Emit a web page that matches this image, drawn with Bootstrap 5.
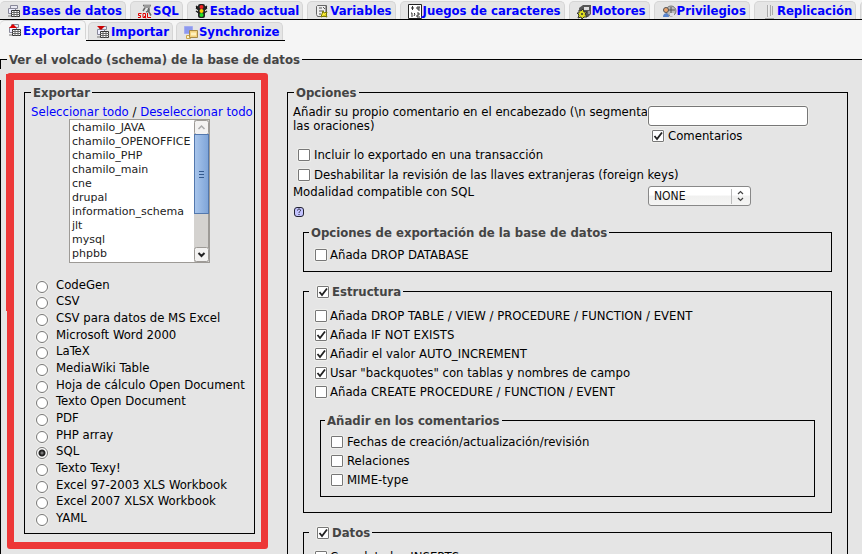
<!DOCTYPE html>
<html lang="es">
<head>
<meta charset="utf-8">
<meta name="viewport" content="width=device-width, initial-scale=1">
<title>Exportar</title>
<link href="https://cdn.jsdelivr.net/npm/bootstrap@5.3.0/dist/css/bootstrap.min.css" rel="stylesheet">
<style>
body{font:13px/15px "DejaVu Sans Condensed","DejaVu Sans",sans-serif;background:#f5f5f5;color:#000;height:100vh;overflow:hidden}
a{color:#00f;text-decoration:none}
.tabs-main{border-bottom:1px solid #000;padding-top:1px;gap:4px;height:20px}
.tabs-main .nav-link,.tabs-sub .nav-link{display:flex;align-items:center;white-space:nowrap;font-weight:700;color:#00f;background:#e5e5e5;border:1px solid #d5d5d5;border-bottom:0;border-radius:5px 5px 0 0;padding:0 3px 0 7px;height:18px}
.tabs-main .nav-link:first-child{border-left:0}
.nav-link svg{width:15px;height:16px;flex:none}
.tabs-sub{height:21px}
.tabs-sub .nav-link.active{background:#f5f5f5;padding-left:8px;padding-right:5px;border-left:0;height:19px}
.tabs-rest{border-bottom:1px solid #000;padding:2px 2px 0 2px;gap:3px;height:21px}
fieldset{border:1px solid #000;background:#e5e5e5}
legend{float:none;width:auto;margin:0;padding:0 2px;font-size:13px;line-height:15px;font-weight:700;color:#444}
.page-set{border-width:1px 0 0;margin-top:11px}
.page-set>legend{margin-left:7px}
.page-set::after{content:"";position:absolute;left:0;top:59px;width:1px;height:10px;background:#000}
.page-body{padding:6px 14px 0 7px;gap:19px;background:linear-gradient(#000,#000) 0 13px/1px 100% no-repeat}
.marked{position:relative;width:261px;flex:none;border:7px solid #ed3737;border-radius:3px;padding:5px 6px 8px 10px}
.marked::before{content:"";position:absolute;left:-8px;top:-6px;width:2px;height:237px;background:#ed3737}
.export-set{padding:4px 6px 6px}
.dblist{width:141px;height:144px;border:1px solid #9d9a96;background:#fff}
.dblist select{flex:1;min-width:0;border:0;outline:0;padding:1px 0 0;margin:0;font:11px/14px "DejaVu Sans",sans-serif;color:#222;background:#fff;overflow:hidden;scrollbar-width:none;height:142px}
.dblist option{padding:0 2px;min-height:0;height:14px;line-height:14px;white-space:nowrap}
.dblist svg{width:15px;height:142px;flex:none}
.formats{margin-top:14px;padding-left:5px}
.fmt{height:17px;gap:8px}
.fmt:nth-child(3n+1){height:16px}
.fmt input{margin-top:4px}
input[type=radio],input[type=checkbox]{appearance:none;width:12px;height:12px;flex:none;background:#fff;border:1px solid #777;box-shadow:0 0 0 1px #efefec}
input[type=radio]{border-radius:50%}
input[type=radio]:checked{background:radial-gradient(circle,#777 0 1px,#222 2px 3px,#fff 4px)}
input[type=checkbox]{margin-top:1px;border-radius:1px}
input[type=checkbox]:checked{background:#fff url("data:image/svg+xml,%3Csvg xmlns='http://www.w3.org/2000/svg' viewBox='0 0 10 10'%3E%3Cpath d='M1.5 5 4 8 9 1.5' fill='none' stroke='%23222' stroke-width='1.8'/%3E%3C/svg%3E")}
.opt-set{margin-top:12px;padding:4px 15px 20px 5px}
.opt-set>legend{margin-left:1px}
.comment-label{width:355px;line-height:14px;padding-top:1px;white-space:nowrap}
.comment-box{width:160px;height:20px;border:1px solid #777;border-radius:3px;background:#fff;box-shadow:0 0 0 1px #efefec;margin-top:2px}
.chk{display:flex;align-items:center;gap:4px;white-space:nowrap}
.under-box{margin-top:2px}
.top-opts{padding:1px 0 0 5px}
.rows .chk{height:19px}
.top-opts .chk{height:20px}
.compat{width:103px;height:20px;margin-top:2px;border:1px solid #888;border-radius:3px;padding:0 5px;font:12px/18px "DejaVu Sans Condensed",sans-serif;appearance:none;color:#111;background:url("data:image/svg+xml,%3Csvg xmlns='http://www.w3.org/2000/svg' width='20' height='18'%3E%3Cpath d='M1.5 2v15' stroke='%23bbb'/%3E%3Cpath d='M8 7l2.500-2.500L13 7M8 11l2.500 2.500L13 11' fill='none' stroke='%23444' stroke-width='1.200'/%3E%3C/svg%3E") right 0 top 0 no-repeat,linear-gradient(#fff,#fff 45%,#f0f0ef 50%,#f5f5f4)}
.help{width:10px;height:12px;display:block;margin-left:1px;margin-bottom:7px}
.group{margin:0 0 12px 10px;padding:5px 11px 7px}
.group legend{margin-left:-6px}
.group .with-check{padding-left:8px}
.with-check~.rows{margin-top:2px}
.group .chk{gap:3px}
.group .nested{margin:12px 5px 8px 5px;padding:4px 10px 7px}
.group .nested .chk{gap:4px}
</style>
<script src="https://cdn.jsdelivr.net/npm/bootstrap@5.3.0/dist/js/bootstrap.bundle.min.js"></script>
</head>
<body>
<svg class="d-none">
<symbol id="i-db" viewBox="0 0 15 16"><path d="M3.500 2.500h7v3h-7z" fill="#e8e8f2" stroke="#889"/><path d="M1.500 5.500h7v5h-7z" fill="#eef" stroke="#889"/><path d="M1 13h3" stroke="#777"/><path d="M4.500 7.500h8v6h-8z" fill="#fff" stroke="#333"/><path d="M4 9.500h9M4 11.500h9M7 8v6M10 8v6" stroke="#666"/></symbol>
<symbol id="i-up" viewBox="0 0 15 16"><use href="#i-db"/><path d="M1 6l4-4 4 4z" fill="#d00"/></symbol>
<symbol id="i-down" viewBox="0 0 15 16"><use href="#i-db"/><path d="M1 2h8L5 6z" fill="#c00"/></symbol>
<symbol id="i-sql" viewBox="0 0 15 16"><path d="M5 2.500h7l-2 5 3 5M8 3l-3 5M11 3v5l-3 1" fill="none" stroke="#666" stroke-width="1.500"/><path d="M6 2h6v3H6z" fill="#999"/><path d="M3.500 10.500h-3v2h2v2h-3M5 10.500h2.500v4H5zM6 13l2 2.500M9.500 10v4.500H13" fill="none" stroke="#e00000"/></symbol>
<symbol id="i-light" viewBox="0 0 15 16"><path d="M1 3l3 2v2L1 5M1 8l3 2v1M12 3L9 5v2l3-2M12 8l-3 2" stroke="#222" stroke-width="1.500"/><rect x="3" y="1" width="7" height="14" rx="2" fill="#222"/><circle cx="6.500" cy="4" r="2" fill="#e22"/><circle cx="6.500" cy="8" r="2" fill="#fc0"/><circle cx="6.500" cy="12" r="2" fill="#2d2"/></symbol>
<symbol id="i-vars" viewBox="0 0 15 16"><path d="M2.500 2.500h9v11h-9l-1-2v-8z" fill="#eee" stroke="#666"/><path d="M4 5h3M8 4l2 2M4 8h5M4 11h2M11 3v10" stroke="#555"/><path d="M8 8l1 2 3-1-1 3 1 2-3-1-3 1 1-3z" fill="#fe3" stroke="#770"/></symbol>
<symbol id="i-chars" viewBox="0 0 15 16"><path d="M.5 1.500h13v14H.5z" fill="#fff" stroke="#222"/><path d="M3 5h3M4.500 3v4M9 4h3M9 4v2h2M11 4v4M3 10h1v4M6 10l1 1-1 2M9 10h2v2H9v2h3" fill="none" stroke="#333"/></symbol>
<symbol id="i-engine" viewBox="0 0 15 16"><path d="M2 5l4-3h8v9l-3 3H3z" fill="#555"/><path d="M7 4h5v3H7z" fill="#ddd"/><path d="M11 8h2v3h-2z" fill="#999"/><path d="M2 7l2 1 2-2 1 3h3l-2 2 2 3H7l-2 2-1-2-3 1 1-3-2-2h2z" fill="#dd2" stroke="#333"/><circle cx="5" cy="11" r="1" fill="#333"/></symbol>
<symbol id="i-priv" viewBox="0 0 15 16"><circle cx="9" cy="8" r="5" fill="#bbb" stroke="#777"/><path d="M6 7h7M9 4v8" stroke="#555"/><circle cx="4" cy="7" r="2.500" fill="#eba56c" stroke="#555"/><path d="M1 14c0-5 6-5 6 0z" fill="#5b86ce"/><path d="M8 10h4v3H8z" fill="#e0e0e8"/></symbol>
<symbol id="i-repl" viewBox="0 0 15 16"><path d="M5.500 2v12M8.500 2v11M10.500 3v9M3 15.500h9" stroke="#aaa"/><path d="M6.500 2v11" stroke="#eee"/></symbol>
<symbol id="i-sync" viewBox="0 0 15 16"><path d="M.5 2.500h8v7h-8z" fill="#8c99ee" stroke="#a3aaf0"/><path d="M2.500 11.500h4v3h-4z" fill="#fff3bd" stroke="#cba64a"/><path d="M5.500 6.500h8v7h-8z" fill="#f3d17b" stroke="#a78a49"/><path d="M7 8.500h5v3H7z" fill="#fff1bd"/></symbol>
</svg>

<nav class="nav tabs-main flex-nowrap" aria-label="Servidor">
<a class="nav-link" href="#"><svg><use href="#i-db"/></svg>Bases de datos</a>
<a class="nav-link" href="#"><svg><use href="#i-sql"/></svg>SQL</a>
<a class="nav-link" href="#"><svg><use href="#i-light"/></svg>Estado actual</a>
<a class="nav-link" href="#"><svg><use href="#i-vars"/></svg>Variables</a>
<a class="nav-link" href="#"><svg><use href="#i-chars"/></svg>Juegos de caracteres</a>
<a class="nav-link" href="#"><svg><use href="#i-engine"/></svg>Motores</a>
<a class="nav-link" href="#"><svg><use href="#i-priv"/></svg>Privilegios</a>
<a class="nav-link" href="#"><svg><use href="#i-repl"/></svg>Replicación</a>
<a class="nav-link" href="#" aria-label="Más"></a>
</nav>
<nav class="nav tabs-sub flex-nowrap" aria-label="Acciones">
<a class="nav-link active" href="#" aria-current="page"><svg><use href="#i-up"/></svg>Exportar</a>
<div class="tabs-rest d-flex">
<a class="nav-link" href="#"><svg><use href="#i-down"/></svg>Importar</a>
<a class="nav-link" href="#"><svg><use href="#i-sync"/></svg>Synchronize</a>
</div>
</nav>

<form>
<fieldset class="page-set">
<legend>Ver el volcado (schema) de la base de datos</legend>
<div class="page-body d-flex align-items-start">
<div class="marked">
<fieldset class="export-set">
<legend>Exportar</legend>
<div class="text-center text-nowrap"><a href="#">Seleccionar todo</a> / <a href="#">Deseleccionar todo</a></div>
<div class="dblist d-flex mx-auto">
<select multiple size="10" aria-label="Bases de datos">
<option>chamilo_JAVA</option><option>chamilo_OPENOFFICE</option><option>chamilo_PHP</option><option>chamilo_main</option><option>cne</option><option>drupal</option><option>information_schema</option><option>jlt</option><option>mysql</option><option>phpbb</option>
</select>
<svg viewBox="0 0 15 142" aria-hidden="true"><defs><linearGradient id="g"><stop stop-color="#a9c6ec"/><stop offset="1" stop-color="#7ea4d8"/></linearGradient></defs><path d="M0 0h15v142H0z" fill="#d4d2cf"/><path d="M14.500 94v34" stroke="#9d9a96"/><rect x=".5" y=".5" width="14" height="14" rx="2" fill="#f3f2f1" stroke="#9d9a96"/><path d="M4.500 9l3-3 3 3" fill="none" stroke="#aaa" stroke-width="1.500"/><rect x=".5" y="14.500" width="14" height="79" fill="url(#g)" stroke="#5378ad"/><path d="M5 51.500h5M5 54.500h5M5 57.500h5" stroke="#34598d"/><rect x=".5" y="127.500" width="14" height="14" rx="2" fill="#f3f2f1" stroke="#9d9a96"/><path d="M4.500 133l3 3 3-3" fill="none" stroke="#222" stroke-width="2"/></svg>
</div>
<div class="formats">
<label class="fmt d-flex align-items-start"><input type="radio" name="f">CodeGen</label>
<label class="fmt d-flex align-items-start"><input type="radio" name="f">CSV</label>
<label class="fmt d-flex align-items-start"><input type="radio" name="f">CSV para datos de MS Excel</label>
<label class="fmt d-flex align-items-start"><input type="radio" name="f">Microsoft Word 2000</label>
<label class="fmt d-flex align-items-start"><input type="radio" name="f">LaTeX</label>
<label class="fmt d-flex align-items-start"><input type="radio" name="f">MediaWiki Table</label>
<label class="fmt d-flex align-items-start"><input type="radio" name="f">Hoja de cálculo Open Document</label>
<label class="fmt d-flex align-items-start"><input type="radio" name="f">Texto Open Document</label>
<label class="fmt d-flex align-items-start"><input type="radio" name="f">PDF</label>
<label class="fmt d-flex align-items-start"><input type="radio" name="f">PHP array</label>
<label class="fmt d-flex align-items-start"><input type="radio" name="f" checked>SQL</label>
<label class="fmt d-flex align-items-start"><input type="radio" name="f">Texto Texy!</label>
<label class="fmt d-flex align-items-start"><input type="radio" name="f">Excel 97-2003 XLS Workbook</label>
<label class="fmt d-flex align-items-start"><input type="radio" name="f">Excel 2007 XLSX Workbook</label>
<label class="fmt d-flex align-items-start"><input type="radio" name="f">YAML</label>
</div>
</fieldset>
</div>

<fieldset class="opt-set flex-grow-1">
<legend>Opciones</legend>
<div class="d-flex align-items-start">
<label class="comment-label" for="comment">Añadir su propio comentario en el encabezado (\n segmenta<br>las oraciones)</label>
<div>
<input class="comment-box d-block" id="comment" type="text">
<label class="chk under-box ps-1"><input type="checkbox" checked>Comentarios</label>
</div>
</div>
<div class="top-opts">
<label class="chk"><input type="checkbox">Incluir lo exportado en una transacción</label>
<label class="chk"><input type="checkbox">Deshabilitar la revisión de las llaves extranjeras (foreign keys)</label>
</div>
<div class="d-flex align-items-start">
<label class="comment-label" for="compat">Modalidad compatible con SQL</label>
<select class="compat" id="compat"><option>NONE</option></select>
</div>
<a href="#" aria-label="Ayuda"><svg class="help" viewBox="0 0 10 12"><rect x=".5" y="1.500" width="9" height="9" rx="2.500" fill="#c4c4ff" stroke="#223"/><path d="M3.500 4.500c0-2 3-2 3 0 0 1-1.500 1-1.500 2.300M5 8v1" fill="none" stroke="#223"/></svg></a>
<fieldset class="group">
<legend>Opciones de exportación de la base de datos</legend>
<div class="rows"><label class="chk"><input type="checkbox">Añada DROP DATABASE</label></div>
</fieldset>
<fieldset class="group">
<legend class="with-check"><label class="chk"><input type="checkbox" checked>Estructura</label></legend>
<div class="rows">
<label class="chk"><input type="checkbox">Añada DROP TABLE / VIEW / PROCEDURE / FUNCTION / EVENT</label>
<label class="chk"><input type="checkbox" checked>Añada IF NOT EXISTS</label>
<label class="chk"><input type="checkbox" checked>Añadir el valor AUTO_INCREMENT</label>
<label class="chk"><input type="checkbox" checked>Usar "backquotes" con tablas y nombres de campo</label>
<label class="chk"><input type="checkbox">Añada CREATE PROCEDURE / FUNCTION / EVENT</label>
</div>
<fieldset class="nested">
<legend>Añadir en los comentarios</legend>
<div class="rows">
<label class="chk"><input type="checkbox">Fechas de creación/actualización/revisión</label>
<label class="chk"><input type="checkbox">Relaciones</label>
<label class="chk"><input type="checkbox">MIME-type</label>
</div>
</fieldset>
</fieldset>
<fieldset class="group">
<legend class="with-check"><label class="chk"><input type="checkbox" checked>Datos</label></legend>
<div class="rows"><label class="chk"><input type="checkbox">Complete los INSERTS</label></div>
</fieldset>
</fieldset>
</div>
</fieldset>
</form>
</body>
</html>
